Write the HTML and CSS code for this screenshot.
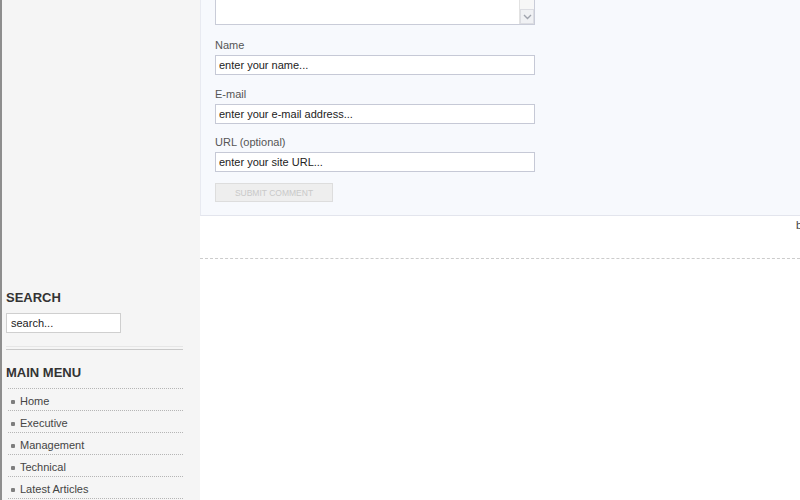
FILE: index.html
```html
<!DOCTYPE html>
<html lang="en">
<head>
<meta charset="utf-8">
<title>Comment form</title>
<link rel="stylesheet" href="styles.css">
</head>
<body>
<div class="page">
  <aside class="sidebar">
    <div class="module">
      <h3 class="module-title">SEARCH</h3>
      <input class="search-input" type="text" value="search...">
    </div>
    <div class="sep"></div>
    <div class="module">
      <h3 class="module-title title-menu">MAIN MENU</h3>
      <ul class="menu">
        <li>Home</li>
        <li>Executive</li>
        <li>Management</li>
        <li>Technical</li>
        <li>Latest Articles</li>
      </ul>
    </div>
  </aside>
  <main class="content">
    <form class="comment-box">
      <div class="textarea-wrap">
        <textarea class="comment-text"></textarea>
        <div class="scrollbar">
          <span class="sb-down"><svg width="9" height="6" viewBox="0 0 9 6"><path d="M1 1 L4.5 4.5 L8 1" fill="none" stroke="#a0a4ae" stroke-width="1.4"/></svg></span>
        </div>
      </div>
      <div class="field first">
        <label class="field-label">Name</label>
        <input class="field-input" type="text" value="enter your name...">
      </div>
      <div class="field">
        <label class="field-label">E-mail</label>
        <input class="field-input" type="text" value="enter your e-mail address...">
      </div>
      <div class="field">
        <label class="field-label">URL (optional)</label>
        <input class="field-input" type="text" value="enter your site URL...">
      </div>
      <button class="submit" type="button" disabled>SUBMIT COMMENT</button>
    </form>
    <div class="backtop">back to top</div>
    <div class="divider"></div>
  </main>
</div>
</body>
</html>
```
FILE: styles.css
```css
html, body {
  margin: 0;
  padding: 0;
  height: 100%;
  overflow: hidden;
}
body {
  font-family: "Liberation Sans", Arial, sans-serif;
  font-size: 11px;
  color: #333;
  background: #fff;
}
.page {
  display: flex;
  height: 500px;
}
.sidebar {
  width: 200px;
  flex: none;
  box-sizing: border-box;
  border-left: 2px solid #8e8e8e;
  background: #f5f5f5;
  padding: 290px 17px 0 4px;
}
.module-title {
  margin: 0;
  font-size: 13px;
  line-height: 16px;
  font-weight: bold;
  color: #333;
}
.search-input {
  display: block;
  margin-top: 7px;
  width: 115px;
  height: 20px;
  box-sizing: border-box;
  border: 1px solid #cfcfcf;
  background: #fff;
  padding: 0 4px;
  font-family: "Liberation Sans", Arial, sans-serif;
  font-size: 11px;
  color: #222;
  outline: none;
}
.sep {
  margin-top: 13px;
  height: 2px;
  border-top: 1px solid #e6e6e6;
  border-bottom: 1px solid #c9c9c9;
}
.title-menu {
  margin-top: 15px;
}
.menu {
  list-style: none;
  margin: 7px 0 0 2px;
  padding: 0;
}
.menu li {
  display: flex;
  align-items: flex-start;
  border-top: 1px dotted #b5b5b5;
  padding: 4px 0 0 0;
  height: 17px;
  line-height: 16px;
  color: #444;
  font-size: 11px;
}
.menu li::before {
  content: "";
  width: 4px;
  height: 4px;
  border-radius: 1px;
  background: #7e7e7e;
  margin: 7px 5px 0 3px;
  flex: none;
}
.menu li:last-child {
  border-bottom: 1px dotted #b5b5b5;
}
.content {
  flex: 1;
  min-width: 0;
  overflow: hidden;
  background: #fff;
}
.comment-box {
  margin: 0;
  background: #f7f9fd;
  border-left: 1px solid #e8eaf1;
  border-bottom: 1px solid #e3e5ed;
  padding: 0 14px 13px;
}
.textarea-wrap {
  display: flex;
  width: 320px;
  height: 85px;
  margin-top: -60px;
  box-sizing: border-box;
  border: 1px solid #c9ccd8;
  background: #fff;
}
.comment-text {
  flex: 1;
  border: none;
  resize: none;
  outline: none;
  background: #fff;
  margin: 0;
  padding: 2px;
}
.scrollbar {
  width: 14px;
  flex: none;
  display: flex;
  flex-direction: column;
  justify-content: flex-end;
  background: #f7f7f7;
  border-left: 1px solid #e2e2e2;
}
.sb-down {
  display: flex;
  align-items: center;
  justify-content: center;
  height: 15px;
  box-sizing: border-box;
  border: 1px solid #dcdde2;
  background: #f0f1f4;
}
.field {
  margin-bottom: 11.5px;
}
.field.first {
  margin-top: 13px;
}
.field-label {
  display: block;
  line-height: 15px;
  margin-bottom: 2px;
  color: #555;
  font-size: 11px;
}
.field-input {
  display: block;
  width: 320px;
  height: 20px;
  box-sizing: border-box;
  border: 1px solid #c6c9d6;
  background: #fff;
  padding: 0 3px;
  font-family: "Liberation Sans", Arial, sans-serif;
  font-size: 11px;
  color: #222;
  outline: none;
}
.submit {
  display: block;
  margin-top: -0.5px;
  width: 118px;
  height: 19px;
  padding: 0;
  border: 1px solid #dddddd;
  background: #eeeeee;
  color: #c9c9c9;
  font-family: "Liberation Sans", Arial, sans-serif;
  font-size: 8.5px;
}
.backtop {
  margin-top: 2px;
  padding-left: 596px;
  white-space: nowrap;
  line-height: 14px;
  color: #444;
  font-size: 11px;
}
.divider {
  margin-top: 26px;
  border-top: 1px dashed #cccccc;
}
```
